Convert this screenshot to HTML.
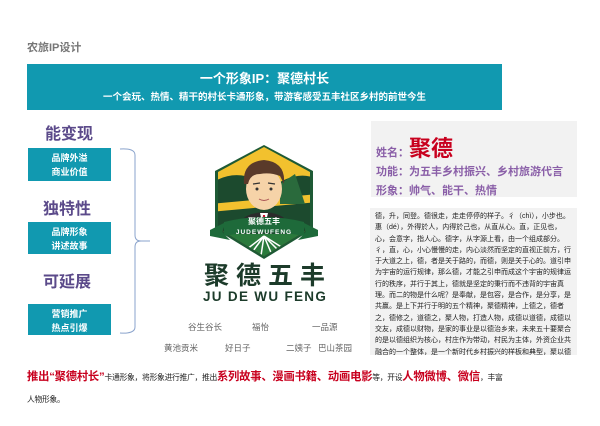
<!DOCTYPE html>
<html><head><meta charset="utf-8">
<style>
*{margin:0;padding:0;box-sizing:border-box}
body{width:600px;height:426px;background:#fff;position:relative;overflow:hidden;font-family:"Liberation Sans","Noto Sans CJK SC",sans-serif}
.a{position:absolute;white-space:nowrap}
.box{position:absolute;left:28px;width:83px;background:#1199b0;color:#fff;font-size:9px;font-weight:bold;text-align:center;line-height:14px;padding-top:3px}
.h{font-size:16px;font-weight:bold;color:#5b4a8a}
.n{font-size:8.5px;color:#666}
.red{color:#c8001e;font-weight:bold;font-size:11.3px;letter-spacing:-0.2px}
</style></head><body>
<div class="a" style="left:27px;top:39px;font-size:11px;font-weight:bold;color:#777">农旅IP设计</div>
<div class="a" style="left:27px;top:64px;width:475px;height:46px;background:#1199b0;color:#fff;text-align:center">
<div style="font-size:13px;font-weight:bold;margin-top:6px;line-height:17px">一个形象IP：聚德村长</div>
<div style="font-size:9.5px;font-weight:bold;margin-top:4px;line-height:13px">一个会玩、热情、精干的村长卡通形象，带游客感受五丰社区乡村的前世今生</div>
</div>
<div class="a h" style="left:45px;top:120px">能变现</div>
<div class="box" style="top:148px;height:33px">品牌外溢<br>商业价值</div>
<div class="a h" style="left:43px;top:195px">独特性</div>
<div class="box" style="top:222px;height:32px">品牌形象<br>讲述故事</div>
<div class="a h" style="left:43px;top:268px">可延展</div>
<div class="box" style="top:304px;height:31px">营销推广<br>热点引爆</div>
<svg class="a" style="left:115px;top:145px" width="40" height="195"><path d="M5 4 Q20 3 20 10 L20 90 Q20 96 26 96 L35 96 M26 96 Q20 96 20 102 L20 182 Q20 189 5 188" fill="none" stroke="#8aa3cc" stroke-width="1"/></svg>
<svg class="a" style="left:210px;top:144px" width="108" height="118" viewBox="0 0 108 118">
<defs><clipPath id="c"><path d="M54 3 L100 28 L100 84 L54 112 L8 84 L8 28Z"/></clipPath></defs>
<path d="M54 1 L103 27 L103 85 L54 115 L5 85 L5 27Z" fill="#1e5a35"/>
<g clip-path="url(#c)">
<rect x="0" y="0" width="108" height="118" fill="#f2c12e"/>
<path d="M0 40 Q30 20 60 45 Q85 25 108 35 L108 118 L0 118Z" fill="#1c4a2e"/>
<path d="M0 60 L108 50 L108 58 L0 68Z" fill="#f2c12e"/>
<path d="M70 40 L85 30 L95 60 L70 60Z" fill="#2a6a3c"/>
<path d="M0 90 L108 90 L108 118 L0 118Z" fill="#2a7a3c"/>
<g stroke="#fff" stroke-width="1.5"><path d="M54 92 L20 118 M54 92 L35 118 M54 92 L50 118 M54 92 L65 118 M54 92 L80 118 M54 92 L95 118"/></g>
</g>
<path d="M30 82 Q30 70 54 68 Q78 70 78 82 L78 88 L30 88Z" fill="#2b2b2b"/>
<path d="M50 69 L54 86 L58 69Z" fill="#fff"/><path d="M53 71 L55 71 L56 84 L54 86 L52 84Z" fill="#c8102e"/>
<ellipse cx="54" cy="45" rx="18" ry="21" fill="#f6d3a8"/>
<path d="M34 40 Q32 18 54 16 Q76 18 74 40 L70 32 Q60 28 50 30 Q40 30 38 40Z" fill="#5a3a2a"/>
<circle cx="47" cy="45" r="1.5" fill="#333"/><circle cx="61" cy="45" r="1.5" fill="#333"/>
<path d="M43 40 L50 39 M58 39 L65 40" stroke="#333" stroke-width="1.2"/>
<path d="M49 55 Q54 58 59 55" stroke="#a55" fill="none"/>
<path d="M0 86 L16 78 L12 88 L20 96 L0 92Z M108 86 L92 78 L96 88 L88 96 L108 92Z" fill="#1e6a3a"/>
<path d="M14 78 Q54 68 94 78 L94 92 Q54 84 14 92Z" fill="#1e6a3a"/>
<text x="54" y="80" font-size="8" font-weight="bold" fill="#fff" text-anchor="middle">聚德五丰</text>
<text x="54" y="90" font-size="6.5" font-weight="bold" fill="#fff" text-anchor="middle" letter-spacing="1">JUDEWUFENG</text>
</svg>
<div class="a" style="left:204px;top:261px;font-size:25px;font-weight:bold;color:#1c3b2a;letter-spacing:7px;line-height:30px">聚德五丰</div>
<div class="a" style="left:203px;top:289px;font-size:13.5px;font-weight:bold;color:#1c3b2a;letter-spacing:1.3px">JU DE WU FENG</div>
<div class="a n" style="left:188px;top:321px">谷生谷长</div>
<div class="a n" style="left:252px;top:321px">福怡</div>
<div class="a n" style="left:312px;top:321px">一品源</div>
<div class="a n" style="left:164px;top:342px">黄池贡米</div>
<div class="a n" style="left:225px;top:342px">好日子</div>
<div class="a n" style="left:286px;top:342px">二姨子</div>
<div class="a n" style="left:318px;top:342px">巴山茶园</div>
<div class="a" style="left:371px;top:121px;width:206px;height:76px;background:#f2f2f2">
<div class="a" style="left:5px;top:10px;font-size:11px;font-weight:bold;color:#8a5fa8">姓名：<span style="font-size:22px;color:#c8001e">聚德</span></div>
<div class="a" style="left:5px;top:42px;font-size:11px;font-weight:bold;color:#8a5fa8">功能：为五丰乡村振兴、乡村旅游代言</div>
<div class="a" style="left:5px;top:61px;font-size:11px;font-weight:bold;color:#8a5fa8">形象：帅气、能干、热情</div>
</div>
<div class="a" style="left:370px;top:208px;width:207px;height:147px;background:#f2f2f2;white-space:normal;padding:3px 3px 0 5px;font-size:7px;line-height:11.3px;color:#222;word-break:break-all;overflow:hidden">德，升，同登。德很走，走走停停的样子。彳（chì），小步也。惠（dé），外得於人，内得於己也，从直从心。直，正见也，心，会意字，指人心。德字，从字源上看，由一个组成部分。彳，直，心，小心慢慢的走，内心淡然而坚定的直视正前方，行于大道之上，德，者是关于路的，而德，则是关于心的。道引申为宇宙的运行规律，那么德，才能之引申而成这个宇宙的规律运行的秩序，并行于其上，德就是坚定的秉行而不违背的宇宙真理。而二的物是什么呢？是奉献，是包容，是合作，是分享，是共赢。是上下并行于明的五个精神，聚德精神，上德之，德者之，德修之，道德之，聚人物，打造人物，成德以道德，成德以交友，成德以财物，是家的事业是以德治乡来，未来五十要聚合的是以德组织为核心，村庄作为带动，村民为主体，外资企业共融合的一个整体，是一个新时代乡村振兴的样板和典型，聚以德福，实现五十，聚德五十，合外人生。</div>
<div class="a" style="left:27px;top:366px;width:478px;white-space:normal;font-size:7.8px;line-height:22px;color:#222;letter-spacing:-0.3px"><span class="red">推出“聚德村长”</span>卡通形象，将形象进行推广，推出<span class="red">系列故事、漫画书籍、动画电影</span>等，开设<span class="red">人物微博、微信</span>，丰富人物形象。</div>
</body></html>
